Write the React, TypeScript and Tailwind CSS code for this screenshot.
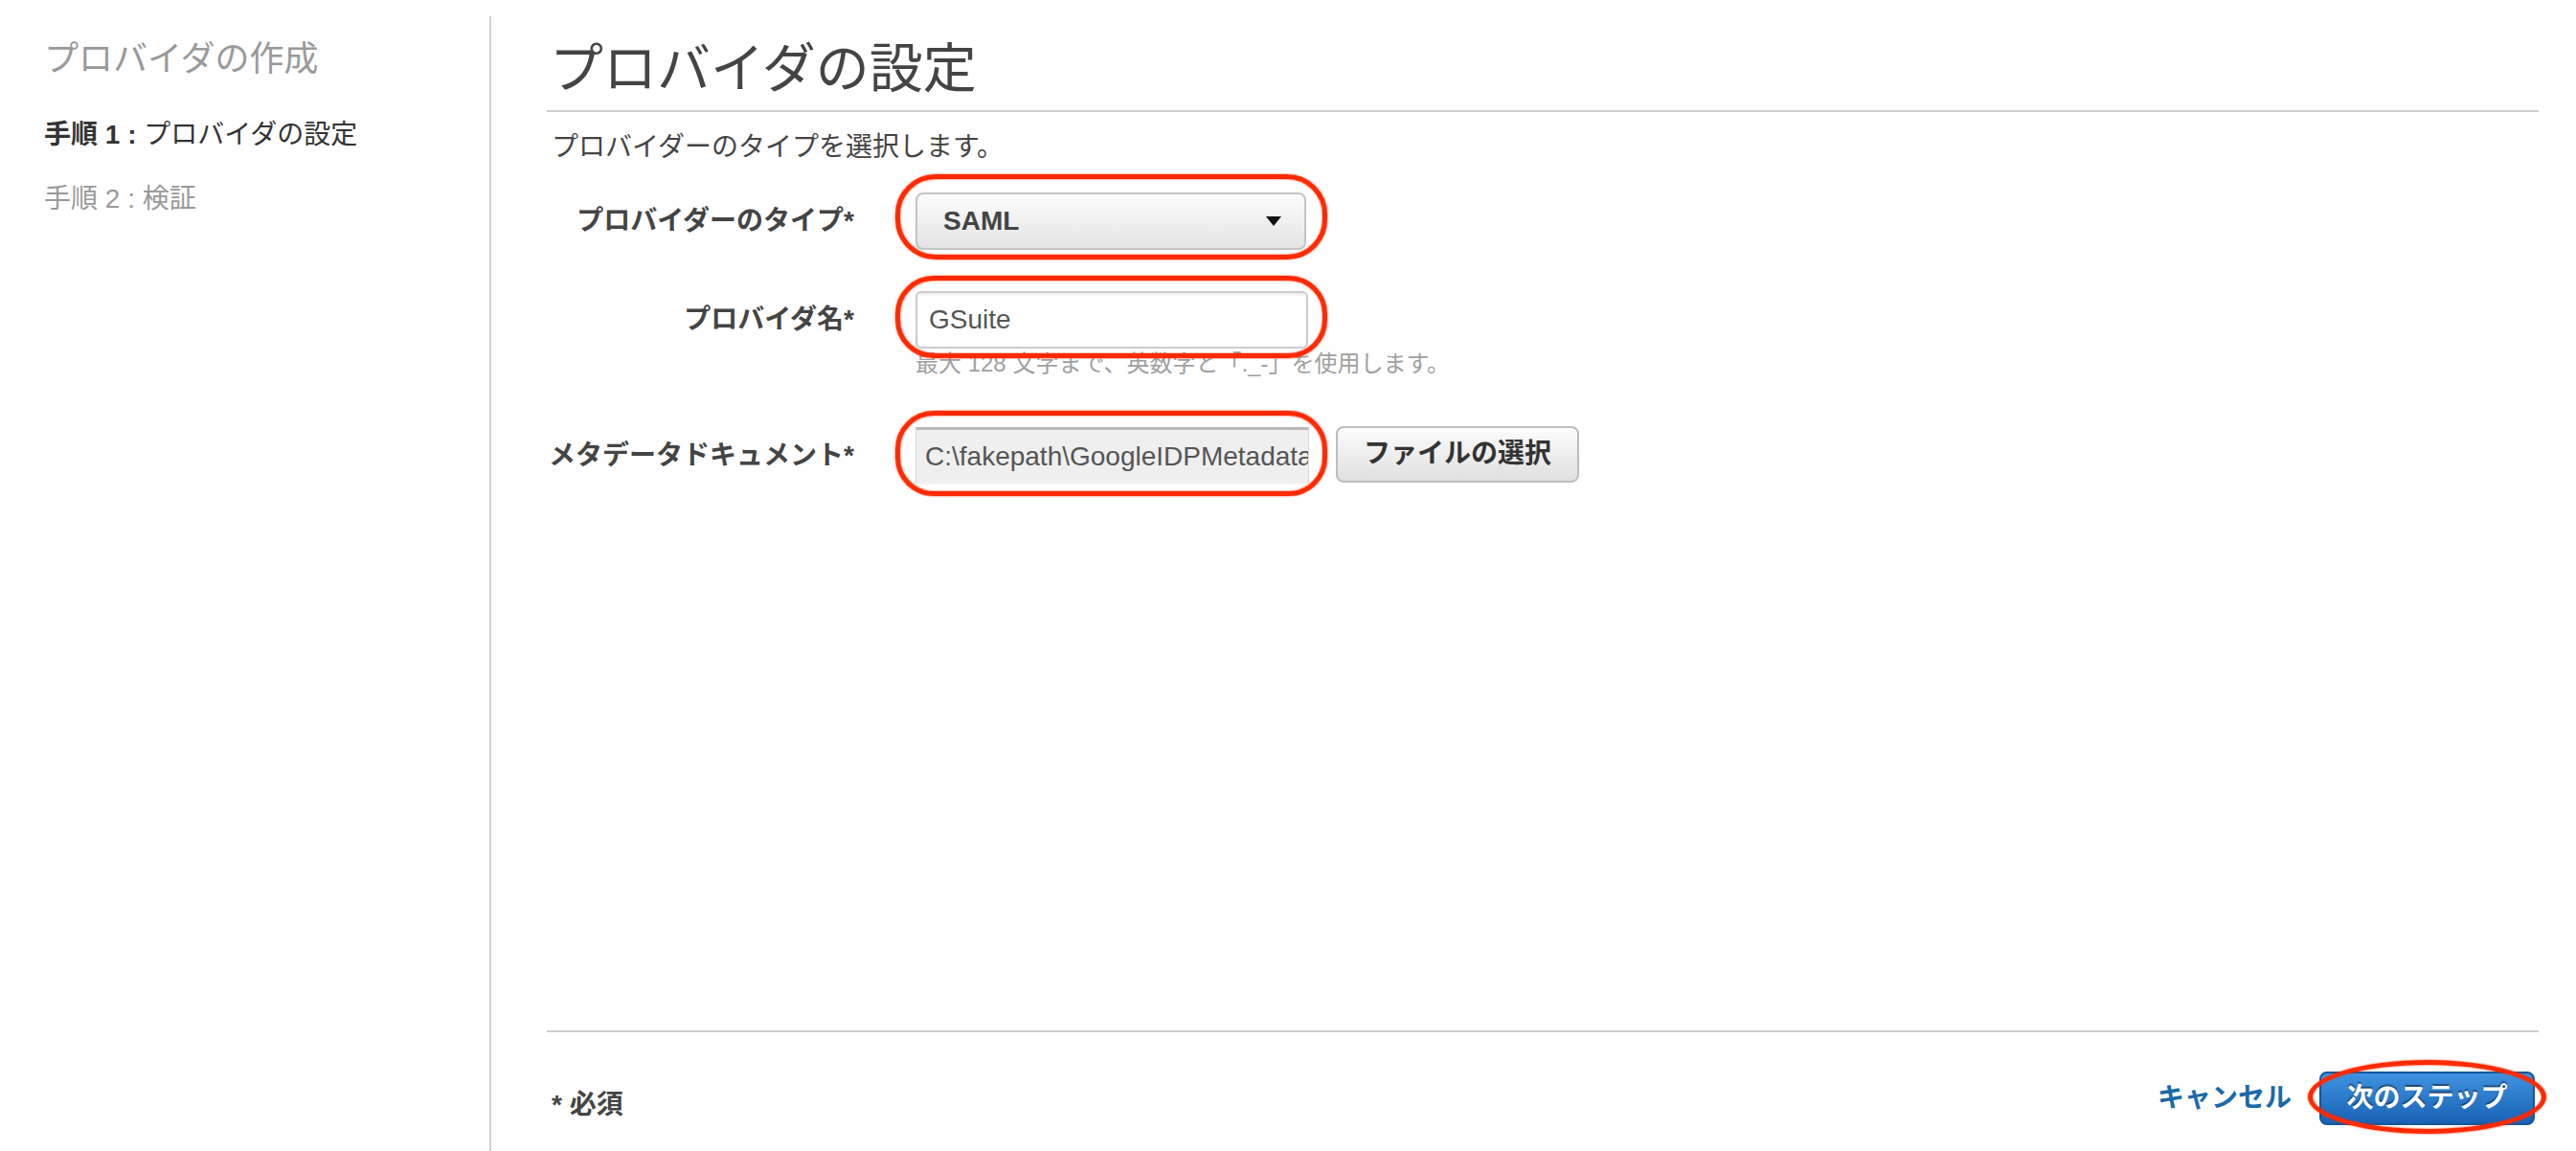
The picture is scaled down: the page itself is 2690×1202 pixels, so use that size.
import type { ReactNode } from 'react';

const FONT = "font-['Liberation_Sans','Noto_Sans_CJK_JP',sans-serif]";

function Marker({ className }: { className: string }) {
  // hand-drawn red outline laid over the control
  return (
    <div
      className={`pointer-events-none absolute border-[5px] border-[#ff2a00] shadow-[0_0_2px_#ff2a00,inset_0_0_2px_#ff2a00] ${className}`}
    />
  );
}

function Row({ label, children }: { label: string; children: ReactNode }) {
  return (
    <div className="flex items-start gap-[64px]">
      <div className="flex h-[60px] w-[316px] items-center justify-end whitespace-nowrap text-[28px] font-bold leading-[28px] text-[#444]">
        {label}
      </div>
      <div className="flex flex-col items-start">{children}</div>
    </div>
  );
}

export default function App() {
  return (
    <div className={`flex h-[1202px] w-[2690px] overflow-hidden bg-white ${FONT}`}>
      <aside className="mt-[17px] w-[513px] shrink-0 border-r-2 border-[#cfcfcf] pl-[46px]">
        <h2 className="mt-[27px] text-[36px] font-normal leading-[36px] text-[#999]">
          プロバイダの作成
        </h2>
        <p className="mt-[47px] text-[28px] leading-[28px] text-[#333]">
          <span className="font-bold">手順 1 :</span> プロバイダの設定
        </p>
        <p className="mt-[39px] text-[28px] leading-[28px] text-[#999]">手順 2 : 検証</p>
      </aside>

      <main className="flex h-full flex-1 flex-col pl-[58px] pr-[39px] pb-[27px]">
        <h1 className="ml-[3px] mt-[44px] text-[56px] font-normal leading-[56px] text-[#444]">
          プロバイダの設定
        </h1>
        <div className="mt-[15px] h-[2px] bg-[#cfcfcf]" />

        <div className="pl-[5px]">
          <p className="mt-[23px] text-[28px] leading-[28px] text-[#444]">
            プロバイダーのタイプを選択します。
          </p>

          <div className="mt-[33px] flex flex-col">
            <Row label="プロバイダーのタイプ*">
              <div className="relative">
                <div className="flex h-[60px] w-[408px] items-center justify-between rounded-[8px] border-2 border-[#c4c4c4] bg-gradient-to-b from-[#fcfcfc] to-[#e4e4e4] pl-[27px] pr-[24px]">
                  <span className="text-[28px] font-bold leading-[28px] text-[#444]">SAML</span>
                  <svg width="16" height="10" viewBox="0 0 16 10">
                    <polygon points="0,0 16,0 8,10" fill="#111" />
                  </svg>
                </div>
                <Marker className="-left-[21px] -right-[22px] -top-[19px] -bottom-[10px] rounded-[42px]" />
              </div>
            </Row>

            <div className="mt-[43px]">
              <Row label="プロバイダ名*">
                <div className="relative">
                  <div className="flex h-[60px] w-[410px] items-center rounded-[6px] border-2 border-[#cccccc] bg-white pl-[12px] shadow-[inset_0_2px_3px_rgba(0,0,0,0.08)]">
                    <span className="text-[28px] leading-[28px] text-[#555]">GSuite</span>
                  </div>
                  <Marker className="-left-[21px] -right-[20px] -top-[16px] -bottom-[10px] rounded-[40px]" />
                </div>
                <p className="mt-[4px] text-[24px] leading-[24px] text-[#a0a0a0]">
                  最大 128 文字まで、英数字と「._-」を使用します。
                </p>
              </Row>
            </div>

            <div className="mt-[54px]">
              <Row label="メタデータドキュメント*">
                <div className="flex items-center gap-[28px]">
                  <div className="relative">
                    <div className="flex h-[60px] w-[411px] items-center overflow-hidden border-t-[3px] border-b-2 border-x border-t-[#b8b8b8] border-b-[#f6f6f6] border-x-[#d8d8d8] bg-[#efefef] pl-[9px]">
                      <span className="whitespace-nowrap text-[28px] leading-[28px] text-[#555]">
                        C:\fakepath\GoogleIDPMetadata
                      </span>
                    </div>
                    <Marker className="-left-[21px] -right-[19px] -top-[17px] -bottom-[12px] rounded-[40px]" />
                  </div>
                  <button className="h-[59px] w-[254px] -translate-y-[2px] rounded-[8px] border-2 border-[#bdbdbd] bg-gradient-to-b from-[#fcfcfc] to-[#e0e0e0] text-[28px] font-bold leading-[28px] text-[#333]">
                    ファイルの選択
                  </button>
                </div>
              </Row>
            </div>
          </div>
        </div>

        <div className="flex-1" />

        <div className="h-[2px] bg-[#cfcfcf]" />
        <div className="flex items-start justify-between pl-[5px] pr-[4px]">
          <span className="mt-[62px] text-[28px] font-bold leading-[28px] text-[#444]">* 必須</span>
          <div className="mt-[41px] flex items-start">
            <a className="mt-[14px] text-[28px] font-bold leading-[28px] text-[#1a69a8]">キャンセル</a>
            <div className="relative ml-[29px]">
              <button className="h-[56px] w-[225px] rounded-[8px] border-2 border-[#14589c] bg-gradient-to-b from-[#3f93e0] to-[#1862b4] text-[28px] font-bold leading-[28px] text-white [text-shadow:0_-2px_1px_rgba(0,0,0,0.45)]">
                次のステップ
              </button>
              <Marker className="-left-[12px] -right-[12px] -top-[12px] -bottom-[9px] rounded-[50%]" />
            </div>
          </div>
        </div>
      </main>
    </div>
  );
}
